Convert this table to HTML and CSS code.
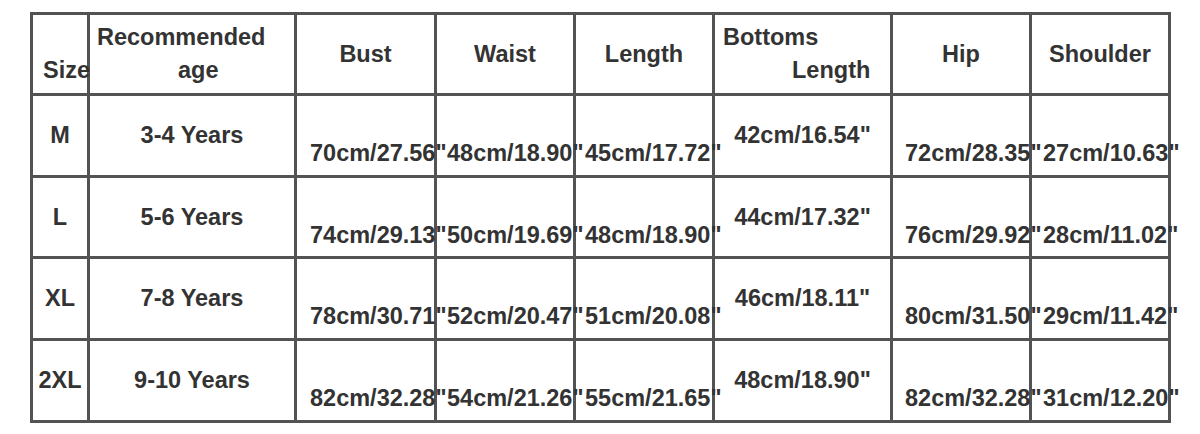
FILE: index.html
```html
<!DOCTYPE html>
<html>
<head>
<meta charset="utf-8">
<link rel="stylesheet" href="styles.css">
</head>
<body>
<div class="page">
<table class="sizes">
  <colgroup>
    <col class="c-size"><col class="c-age"><col class="c-m"><col class="c-m2"><col class="c-m2"><col class="c-bot"><col class="c-m2"><col class="c-m2">
  </colgroup>
  <tr class="head">
    <td class="h-size">Size</td>
    <td class="h-age"><span class="l1">Recommended</span><span class="l2">age</span></td>
    <td class="h-mid">Bust</td>
    <td class="h-mid">Waist</td>
    <td class="h-mid">Length</td>
    <td class="h-bot"><span class="l1">Bottoms</span><span class="l2">Length</span></td>
    <td class="h-mid">Hip</td>
    <td class="h-mid">Shoulder</td>
  </tr>
  <tr class="r1">
    <td class="lab">M</td><td class="lab">3-4 Years</td>
    <td class="val v-bust">70cm/27.56"</td><td class="val v-waist">48cm/18.90"</td><td class="val v-len">45cm/17.72"</td>
    <td class="lab">42cm/16.54"</td>
    <td class="val v-hip">72cm/28.35"</td><td class="val v-sh">27cm/10.63"</td>
  </tr>
  <tr class="r2">
    <td class="lab">L</td><td class="lab">5-6 Years</td>
    <td class="val v-bust">74cm/29.13"</td><td class="val v-waist">50cm/19.69"</td><td class="val v-len">48cm/18.90"</td>
    <td class="lab">44cm/17.32"</td>
    <td class="val v-hip">76cm/29.92"</td><td class="val v-sh">28cm/11.02"</td>
  </tr>
  <tr class="r3">
    <td class="lab">XL</td><td class="lab">7-8 Years</td>
    <td class="val v-bust">78cm/30.71"</td><td class="val v-waist">52cm/20.47"</td><td class="val v-len">51cm/20.08"</td>
    <td class="lab">46cm/18.11"</td>
    <td class="val v-hip">80cm/31.50"</td><td class="val v-sh">29cm/11.42"</td>
  </tr>
  <tr class="r4">
    <td class="lab">2XL</td><td class="lab">9-10 Years</td>
    <td class="val v-bust">82cm/32.28"</td><td class="val v-waist">54cm/21.26"</td><td class="val v-len">55cm/21.65"</td>
    <td class="lab">48cm/18.90"</td>
    <td class="val v-hip">82cm/32.28"</td><td class="val v-sh">31cm/12.20"</td>
  </tr>
</table>
</div>
</body>
</html>
```
FILE: styles.css
```css
html, body {
  margin: 0;
  padding: 0;
  background: #ffffff;
}
.page {
  padding: 12px 0 0 30px;
}
.sizes {
  border-collapse: collapse;
  table-layout: fixed;
  width: 1138px;
  font-family: "Liberation Sans", Arial, sans-serif;
  font-weight: bold;
  font-size: 23.5px;
  line-height: 33px;
  color: #333333;
}
.c-size { width: 57px; }
.c-age { width: 207px; }
.c-m { width: 140px; }
.c-m2 { width: 139px; }
.c-bot { width: 178px; }
.sizes td {
  border: 3px solid #535353;
  padding: 0;
  vertical-align: top;
  white-space: nowrap;
  overflow: visible;
}
.head { height: 81px; }
.r1 { height: 82px; }
.r2 { height: 81px; }
.r3 { height: 82px; }
.r4 { height: 82px; }

.l1, .l2 { display: block; }

.h-size {
  padding-top: 39px !important;
  padding-left: 10px !important;
  text-align: left;
}
.h-age {
  padding-top: 6px !important;
  text-align: left;
}
.h-age .l1 { padding-left: 7px; }
.h-age .l2 { padding-left: 88px; }
.h-mid {
  padding-top: 23px !important;
  text-align: center;
}
.h-bot {
  padding-top: 6px !important;
  text-align: left;
}
.h-bot .l1 { padding-left: 8px; }
.h-bot .l2 { padding-left: 77px; }

.lab {
  padding-top: 23px !important;
  text-align: center;
}
.val {
  padding-top: 41px !important;
  text-align: left;
}
.v-bust { padding-left: 13px !important; }
.v-waist { padding-left: 10px !important; }
.v-len { padding-left: 9px !important; }
.v-hip { padding-left: 12px !important; }
.v-sh { padding-left: 11px !important; }
```
